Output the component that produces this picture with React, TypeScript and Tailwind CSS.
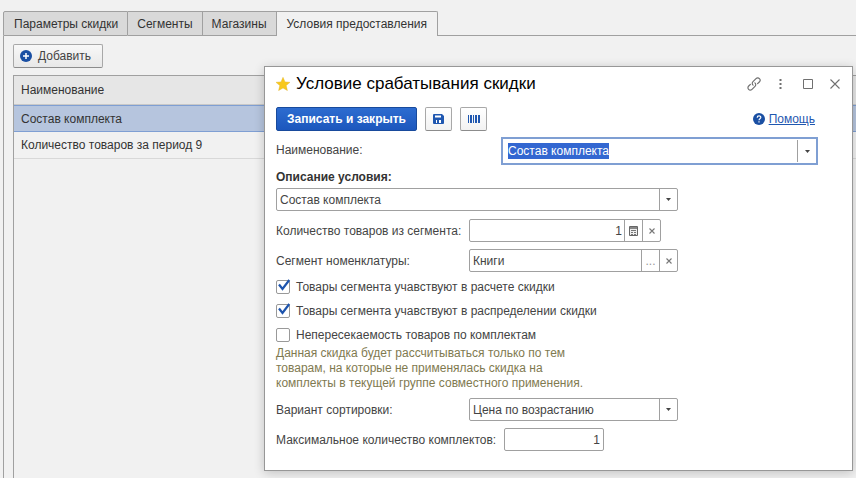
import { useEffect, useRef, type ReactNode } from "react";
import clsx from "clsx";

const tabs = ["Параметры скидки", "Сегменты", "Магазины", "Условия предоставления"];
const activeTab = "Условия предоставления";

const conditions = [
  { name: "Состав комплекта", selected: true },
  { name: "Количество товаров за период 9", selected: false },
];

const checks = [
  { id: "calc", label: "Товары сегмента учавствуют в расчете скидки", checked: true },
  { id: "spread", label: "Товары сегмента учавствуют в распределении скидки", checked: true },
  { id: "unique", label: "Непересекаемость товаров по комплектам", checked: false },
];

function Caret() {
  return (
    <svg width="5" height="3" viewBox="0 0 5 3" aria-hidden="true">
      <path d="M0 0h5L2.5 3z" fill="#444" />
    </svg>
  );
}

function SmallCross() {
  return (
    <svg width="6" height="6" viewBox="0 0 6 6" aria-hidden="true">
      <path d="M.5.5l5 5M5.500.5l-5 5" stroke="#777" strokeWidth="1.100" />
    </svg>
  );
}

// Bordered field with its trailing buttons inside the frame
function Field({ className, children }: { className?: string; children: ReactNode }) {
  return (
    <div className={clsx("flex h-[23px] rounded-xs border border-[#a0a0a0] bg-white", className)}>
      {children}
    </div>
  );
}

function FieldButton({ label, children }: { label: string; children: ReactNode }) {
  return (
    <button
      type="button"
      aria-label={label}
      className="flex w-[18px] shrink-0 items-center justify-center border-l border-[#a0a0a0]"
    >
      {children}
    </button>
  );
}

function SelectField({ id, value, className }: { id: string; value: string; className?: string }) {
  return (
    <Field className={clsx("relative", className)}>
      <select id={id} className="w-full appearance-none bg-transparent px-[3px] outline-none">
        <option>{value}</option>
      </select>
      <span className="pointer-events-none absolute inset-y-0 right-0 flex w-[18px] items-center justify-center border-l border-[#a0a0a0]">
        <Caret />
      </span>
    </Field>
  );
}

function ToolButton({ label, className, children }: { label: string; className?: string; children: ReactNode }) {
  return (
    <button
      type="button"
      aria-label={label}
      className={clsx(
        "flex h-6 w-[27px] items-center justify-center rounded-xs border border-[#a8a8a8] border-b-[#8c8c8c] bg-linear-to-b from-white to-[#f2f2f2]",
        className
      )}
    >
      {children}
    </button>
  );
}

function ConditionDialog() {
  const nameRef = useRef<HTMLInputElement>(null);

  useEffect(() => {
    nameRef.current?.focus();
    nameRef.current?.select();
  }, []);

  return (
    <section
      role="dialog"
      aria-labelledby="dialog-title"
      className="absolute top-[66px] right-[3px] left-[264px] border border-[#979797] bg-white pb-[19px] pl-[11px] text-[#444] shadow-[0_2px_10px_rgba(0,0,0,0.2)]"
    >
      <header className="flex h-[34px] items-center pr-1">
        <svg width="14" height="14" viewBox="0 0 14 14" className="mr-[6px]" aria-hidden="true">
          <path
            d="M7 .3l2 4.600 5 .4-3.800 3.300 1.200 5L7 11l-4.400 2.600 1.200-5L0 5.300l5-.4z"
            fill="#f8c81c"
            stroke="#e0b020"
            strokeWidth=".4"
          />
        </svg>
        <h1 id="dialog-title" className="flex-1 text-[17px] text-black">
          Условие срабатывания скидки
        </h1>
        <div className="flex items-center text-[#707070]">
          <button type="button" aria-label="Ссылка" className="flex w-[27px] justify-center">
            <svg
              width="14"
              height="14"
              viewBox="0 0 14 14"
              fill="none"
              stroke="currentColor"
              strokeWidth="1.200"
              strokeLinecap="round"
              aria-hidden="true"
            >
              <path d="M6.100 8.100C5 7.100 5 5.700 6 4.700L9 1.700c1-1 2.500-1 3.400-.1.9.9.9 2.400-.1 3.400L10.600 6.700" />
              <path d="M7.900 5.900C9 6.900 9 8.300 8 9.300L5 12.300c-1 1-2.500 1-3.400.1-.9-.9-.9-2.400.1-3.400L3.400 7.300" />
            </svg>
          </button>
          <button type="button" aria-label="Меню" className="flex w-[27px] justify-center">
            <svg width="3" height="10" viewBox="0 0 3 10" fill="currentColor" aria-hidden="true">
              <path d="M.5 0h2v2h-2zM.5 4h2v2h-2zM.5 8h2v2h-2z" />
            </svg>
          </button>
          <button type="button" aria-label="Развернуть" className="flex w-[27px] justify-center">
            <svg width="10" height="10" viewBox="0 0 10 10" fill="none" stroke="currentColor" aria-hidden="true">
              <path d="M.5.5h9v9h-9z" />
            </svg>
          </button>
          <button type="button" aria-label="Закрыть" className="flex w-[27px] justify-center">
            <svg width="10" height="10" viewBox="0 0 10 10" stroke="currentColor" strokeWidth="1.100" aria-hidden="true">
              <path d="M.5.5l9 9M9.500.5l-9 9" />
            </svg>
          </button>
        </div>
      </header>

      <div className="pr-[34px]">
        <div className="mt-[6px] flex items-center">
          <button
            type="button"
            className="h-6 w-[141px] rounded-xs border border-[#184a9c] bg-linear-to-b from-[#2d6cd0] to-[#1c57bd] font-bold text-white"
          >
            Записать и закрыть
          </button>
          <ToolButton label="Записать" className="ml-2">
            <svg width="11" height="10" viewBox="0 0 11 10" aria-hidden="true">
              <path d="M1 0h8l2 2v7a1 1 0 0 1-1 1H1a1 1 0 0 1-1-1V1a1 1 0 0 1 1-1z" fill="#1f57b0" />
              <path d="M2 1.500h6v2H2zM3 6h5v3H3z" fill="#fff" />
              <path d="M4 6h2v3H4z" fill="#1f57b0" />
            </svg>
          </ToolButton>
          <ToolButton label="Штрихкод" className="ml-2">
            <svg width="12" height="8" viewBox="0 0 12 8" fill="#1f57b0" aria-hidden="true">
              <path d="M0 0h1v8H0zM2 0h2v8H2zM5 0h1v8H5zM7 0h2v8H7zM10 0h2v8h-2z" />
            </svg>
          </ToolButton>
          <a href="#help" className="ml-auto flex items-center gap-1 pr-[3px] text-[#1f57b0]">
            <svg width="12" height="12" viewBox="0 0 12 12" aria-hidden="true">
              <circle cx="6" cy="6" r="6" fill="#1a4fa3" />
              <path d="M4.200 4.700C4.200 2.300 7.900 2.400 7.800 4.500 7.800 5.700 6 5.800 6 7.200M6 8.200v1.300" stroke="#fff" strokeWidth="1.200" fill="none" />
            </svg>
            <span className="underline">Помощь</span>
          </a>
        </div>

        <div className="mt-[6px] flex">
          <label htmlFor="name" className="w-[225px] shrink-0 pt-[5px]">
            Наименование:
          </label>
          <div className="flex h-7 min-w-0 flex-1 border-2 border-[#7f9fd3] bg-white">
            <input
              id="name"
              ref={nameRef}
              defaultValue="Состав комплекта"
              className="min-w-0 flex-1 px-[5px] outline-none selection:bg-[#3367d1] selection:text-white"
            />
            <button
              type="button"
              aria-label="Выбрать наименование"
              className="my-px flex w-[19px] items-center justify-center border-l border-[#a0a0a0]"
            >
              <Caret />
            </button>
          </div>
        </div>

        <label htmlFor="description" className="mt-1 block font-bold text-[#333]">
          Описание условия:
        </label>
        <SelectField id="description" value="Состав комплекта" className="mt-[3px] w-[402px]" />

        <div className="mt-2 flex items-center">
          <label htmlFor="quantity" className="w-[193px] shrink-0">
            Количество товаров из сегмента:
          </label>
          <Field className="w-[192px]">
            <input id="quantity" defaultValue="1" className="min-w-0 flex-1 px-[2px] text-right outline-none" />
            <FieldButton label="Калькулятор">
              <svg width="9" height="10" viewBox="0 0 9 10" aria-hidden="true">
                <path d="M.5.5h8v9h-8z" fill="#eee" stroke="#666" />
                <path d="M1 1h7v2H1z" fill="#888" />
                <path d="M2 4h5v1H2zM2 6h2v1H2zM5 6h2v1H5zM2 8h2v1H2zM5 8h2v1H5z" fill="#777" />
              </svg>
            </FieldButton>
            <FieldButton label="Очистить количество">
              <SmallCross />
            </FieldButton>
          </Field>
        </div>

        <div className="mt-[7px] flex items-center">
          <label htmlFor="segment" className="w-[193px] shrink-0">
            Сегмент номенклатуры:
          </label>
          <Field className="w-[209px]">
            <input id="segment" defaultValue="Книги" className="min-w-0 flex-1 px-[3px] outline-none" />
            <FieldButton label="Выбрать сегмент">
              <span className="text-[#999]">...</span>
            </FieldButton>
            <FieldButton label="Очистить сегмент">
              <SmallCross />
            </FieldButton>
          </Field>
        </div>

        <div className="mt-[7px] flex flex-col gap-2">
          {checks.map((check) => (
            <div key={check.id} className="flex items-center gap-[6px]">
              <span className="grid size-[14px]">
                <input
                  id={check.id}
                  type="checkbox"
                  defaultChecked={check.checked}
                  className="peer col-start-1 row-start-1 size-[14px] appearance-none rounded-xs border border-[#999] bg-white"
                />
                <svg
                  viewBox="0 0 14 14"
                  className="pointer-events-none invisible col-start-1 row-start-1 size-[14px] overflow-visible peer-checked:visible"
                  aria-hidden="true"
                >
                  <path d="M3 4.500l3.500 4.500L13.300 0" fill="none" stroke="#1d54ad" strokeWidth="2.200" />
                </svg>
              </span>
              <label htmlFor={check.id}>{check.label}</label>
            </div>
          ))}
        </div>

        <p className="mt-[3px] w-[320px] leading-[15px] text-[#7f7a50]">
          Данная скидка будет рассчитываться только по тем
          <br />
          товарам, на которые не применялась скидка на
          <br />
          комплекты в текущей группе совместного применения.
        </p>

        <div className="mt-[7px] flex items-center">
          <label htmlFor="sorting" className="w-[193px] shrink-0">
            Вариант сортировки:
          </label>
          <SelectField id="sorting" value="Цена по возрастанию" className="w-[209px]" />
        </div>

        <div className="mt-[7px] flex items-center">
          <label htmlFor="max-sets" className="w-[228px] shrink-0">
            Максимальное количество комплектов:
          </label>
          <Field className="w-[100px]">
            <input id="max-sets" defaultValue="1" className="min-w-0 flex-1 px-[3px] text-right outline-none" />
          </Field>
        </div>
      </div>
    </section>
  );
}

export default function App() {
  return (
    <main className="relative flex min-h-screen flex-col overflow-hidden bg-[#f1f1f1] pt-[11px] pl-[3px] font-['Liberation_Sans',Arial,sans-serif] text-[12px] leading-4 text-[#333]">
      {/* Tabs */}
      <div role="tablist" className="flex">
        {tabs.map((tab) => (
          <button
            key={tab}
            type="button"
            role="tab"
            aria-selected={tab === activeTab}
            className={clsx(
              "h-[25px] border-t border-r border-[#a0a0a0] first:rounded-tl-xs first:border-l first:pl-[10px]",
              tab === activeTab ? "rounded-tr-xs bg-[#f1f1f1] px-[10px]" : "border-b bg-[#d9d9d9] px-[9px]"
            )}
          >
            {tab}
          </button>
        ))}
        <span className="flex-1 border-b border-[#a0a0a0]" />
      </div>

      {/* Conditions list */}
      <div className="flex flex-1 flex-col border-l border-[#a0a0a0] pt-2 pl-[9px]">
        <button
          type="button"
          className="flex h-6 w-[90px] items-center gap-[6px] rounded-xs border border-[#a8a8a8] border-b-[#8c8c8c] bg-linear-to-b from-[#f8f8f8] to-[#e8e8e8] pl-[6px] text-[#444]"
        >
          <svg width="12" height="12" viewBox="0 0 12 12" aria-hidden="true">
            <circle cx="6" cy="6" r="6" fill="#1a4fa3" />
            <path d="M6 3v6M3 6h6" stroke="#fff" strokeWidth="1.500" />
          </svg>
          Добавить
        </button>
        <div className="mt-[7px] flex-1 border-t border-l border-[#a0a0a0]">
          <table className="w-full border-separate border-spacing-0 text-left">
            <thead>
              <tr>
                <th className="h-[29px] border-b border-[#c8c8c8] bg-[#e6e6e6] px-[7px] font-normal">
                  Наименование
                </th>
              </tr>
            </thead>
            <tbody>
              {conditions.map((row) => (
                <tr key={row.name}>
                  <td
                    className={clsx(
                      "h-[27px] px-[7px]",
                      row.selected
                        ? "border-y border-[#7f9fd3] bg-[#b6c5de]"
                        : "border-b border-[#d8d8d8]"
                    )}
                  >
                    {row.name}
                  </td>
                </tr>
              ))}
            </tbody>
          </table>
        </div>
      </div>

      <ConditionDialog />
    </main>
  );
}
